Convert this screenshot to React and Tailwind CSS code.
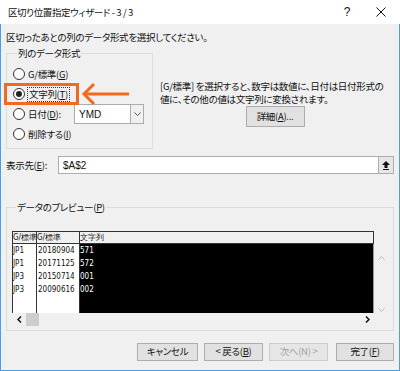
const jp = "font-['Noto_Sans_CJK_JP',sans-serif] [font-feature-settings:'palt'] tracking-[-0.3px]";

const Radio = ({ checked }) => (
  <span className="w-[12px] h-[12px] rounded-full border border-[#333] bg-white flex items-center justify-center shrink-0">
    {checked && <span className="w-[6px] h-[6px] rounded-full bg-[#222]" />}
  </span>
);

const Btn = ({ children, className = "", w }) => (
  <button
    className={`h-[18px] border border-[#adadad] bg-[#e1e1e1] text-[9.5px] leading-none flex items-center justify-center shrink-0 ${w} ${className}`}
  >
    {children}
  </button>
);

const rows = [
  ["JP1", "20180904", "571"],
  ["JP1", "20171125", "572"],
  ["JP3", "20150714", "001"],
  ["JP3", "20090616", "002"],
];

const App = () => {
  return (
    <div className={`w-[400px] h-[371px] flex flex-col text-[#111] text-[9.5px] ${jp}`}>
      {/* title bar */}
      <div className="h-[24px] bg-white flex items-center pl-[8px] shrink-0">
        <span className="text-[9.5px] tracking-[-0.4px] whitespace-pre">区切り位置指定ウィザード - 3 / 3</span>
        <span className="ml-auto mr-[26px] text-[12px] font-['Liberation_Sans',sans-serif]">?</span>
        <svg width="10" height="10" viewBox="0 0 10 10" className="mr-[14px]">
          <path d="M0.5 0.5 L9.5 9.5 M9.5 0.5 L0.5 9.5" stroke="#111" strokeWidth="1" />
        </svg>
      </div>

      {/* body */}
      <div className="flex-1 bg-[#f0f0f0] border-l border-r border-b border-[#4a9ee6] pl-[5px] pr-[5px] flex flex-col relative">
        <div className="h-[22px] pt-[6px] leading-[14px] whitespace-nowrap">
          区切ったあとの列のデータ形式を選択してください。
        </div>

        <div className="flex">
          <fieldset className="w-[147px] shrink-0 border border-[#dcdcdc] pl-[6px] pr-[8px] pt-[4px] pb-[4px]">
            <legend className="px-[1px] ml-[4px] leading-[14px]">列のデータ形式</legend>
            <div className="h-[20px] flex items-center gap-[3px] whitespace-nowrap">
              <Radio />
              <span>G/標準(<u>G</u>)</span>
            </div>
            <div className="h-[20px] flex items-center gap-[2px] whitespace-nowrap">
              <Radio checked />
              <span className="border border-dotted border-[#333] px-[1px] leading-[13px]">
                文字列(<u>T</u>)
              </span>
            </div>
            <div className="h-[20px] flex items-center gap-[3px] whitespace-nowrap">
              <Radio />
              <span className="shrink-0">日付(<u>D</u>):</span>
              <div className="ml-auto shrink-0 w-[70px] h-[20px] bg-white border border-[#acacac] flex items-center">
                <span className="pl-[4px] font-['Liberation_Sans',sans-serif] text-[10px] tracking-normal">YMD</span>
                <span className="ml-auto w-[13px] h-full border-l border-[#acacac] bg-[#f0f0f0] flex items-center justify-center">
                  <svg width="7" height="4" viewBox="0 0 7 4">
                    <path d="M0.5 0.5 L3.5 3.5 L6.5 0.5" stroke="#555" fill="none" />
                  </svg>
                </span>
              </div>
            </div>
            <div className="h-[20px] flex items-center gap-[3px] whitespace-nowrap">
              <Radio />
              <span>削除する(<u>I</u>)</span>
            </div>
          </fieldset>

          <div className="flex-1 pl-[7px] pt-[34px] flex flex-col">
            <div className="leading-[13px] whitespace-nowrap">
              [G/標準] を選択すると、数字は数値に、日付は日付形式の
            </div>
            <div className="leading-[13px] whitespace-nowrap">値に、その他の値は文字列に変換されます。</div>
            <div className="flex justify-center pr-[4px]">
              <Btn w="w-[59px]" className="h-[21px]">
                詳細(<u>A</u>)...
              </Btn>
            </div>
          </div>
        </div>

        {/* destination */}
        <div className="mt-[7px] h-[18px] flex items-center">
          <span className="w-[52px] shrink-0 whitespace-nowrap">表示先(<u>E</u>):</span>
          <div className="flex-1 h-[18px] bg-white border border-[#adadad] flex items-center">
            <span className="pl-[4px] font-['Liberation_Sans',sans-serif] text-[10px] tracking-normal">$A$2</span>
            <span className="ml-auto w-[15px] h-full bg-[#e6e6e6] border-l border-[#adadad] flex items-center justify-center">
              <svg width="8" height="9" viewBox="0 0 8 9">
                <path d="M4 0 L8 4 L5.5 4 L5.5 7 L2.5 7 L2.5 4 L0 4 Z" fill="#111" />
                <rect x="1" y="8" width="6" height="1" fill="#111" />
              </svg>
            </span>
          </div>
        </div>

        {/* preview */}
        <fieldset className="mt-[26px] w-[388px] border border-[#dcdcdc] pl-[5px] pt-[17px] pb-[4px]">
          <legend className="px-[1px] ml-[4px] leading-[14px]">
            データのプレビュー(<u>P</u>)
          </legend>
          <div className="flex font-['Liberation_Sans_Narrow','DejaVu_Sans_Condensed',sans-serif] text-[8px] tracking-normal">
            <div className="w-[362px] flex flex-col">
              <div className="h-[13px] flex border-t border-b border-[#333] bg-[#f0f0f0] leading-[11px]">
                <div className="w-[25px] border-l border-r border-[#333] overflow-hidden whitespace-nowrap">G/標準</div>
                <div className="w-[43px] border-r border-[#333] whitespace-nowrap">G/標準</div>
                <div className="flex-1 border-r border-[#333]">文字列</div>
              </div>
              <div className="h-[69px] flex border-r border-[#999]">
                <div className="w-[25px] bg-white border-l border-r border-[#333] flex flex-col">
                  {rows.map((r, i) => (
                    <div key={i} className="h-[13px] leading-[13px]">{r[0]}</div>
                  ))}
                </div>
                <div className="w-[43px] bg-white border-r border-[#333] flex flex-col">
                  {rows.map((r, i) => (
                    <div key={i} className="h-[13px] leading-[13px] pl-[1px]">{r[1]}</div>
                  ))}
                </div>
                <div className="flex-1 bg-black text-white flex flex-col">
                  {rows.map((r, i) => (
                    <div key={i} className="h-[13px] leading-[13px]">{r[2]}</div>
                  ))}
                </div>
              </div>
              <div className="h-[13px] flex items-center">
                <svg width="5" height="7" viewBox="0 0 5 7" className="ml-[5px]">
                  <path d="M4 0.5 L1 3.5 L4 6.5" stroke="#111" strokeWidth="1.5" fill="none" />
                </svg>
                <span className="ml-[4px] w-[13px] h-[13px] bg-[#cdcdcd]" />
                <svg width="5" height="7" viewBox="0 0 5 7" className="ml-auto mr-[4px]">
                  <path d="M1 0.5 L4 3.5 L1 6.5" stroke="#111" strokeWidth="1.5" fill="none" />
                </svg>
              </div>
            </div>
            <div className="w-[14px] flex flex-col items-center pt-[25px] pb-[14px] justify-between">
              <svg width="7" height="4" viewBox="0 0 7 4">
                <path d="M0.5 3.5 L3.5 0.5 L6.5 3.5" stroke="#bbb" fill="none" />
              </svg>
              <svg width="7" height="4" viewBox="0 0 7 4">
                <path d="M0.5 0.5 L3.5 3.5 L6.5 0.5" stroke="#bbb" fill="none" />
              </svg>
            </div>
          </div>
        </fieldset>

        {/* buttons */}
        <div className="mt-[12px] flex justify-end">
          <Btn w="w-[61px]">キャンセル</Btn>
          <Btn w="w-[59px]" className="ml-[6px] whitespace-pre">
            {"< 戻る("}<u>B</u>)
          </Btn>
          <Btn w="w-[59px]" className="ml-[6px] text-[#a0a0a0] border-[#cccccc] bg-[#e6e6e6] whitespace-pre">
            {"次へ(N) >"}
          </Btn>
          <Btn w="w-[58px]" className="ml-[8px] border-[#0078d7]">
            完了(<u>F</u>)
          </Btn>
        </div>

        {/* annotation */}
        <div className="absolute left-[3px] top-[59px] w-[75px] h-[22px] border-[3px] border-[#f26a1f]" />
        <svg className="absolute left-[80px] top-[58px]" width="50" height="24" viewBox="0 0 50 24">
          <path d="M3 12 L48 12" stroke="#f26a1f" strokeWidth="3" />
          <path d="M13 2 L3 12 L13 22" stroke="#f26a1f" strokeWidth="3" fill="none" />
        </svg>
      </div>
    </div>
  );
};

export default App;
